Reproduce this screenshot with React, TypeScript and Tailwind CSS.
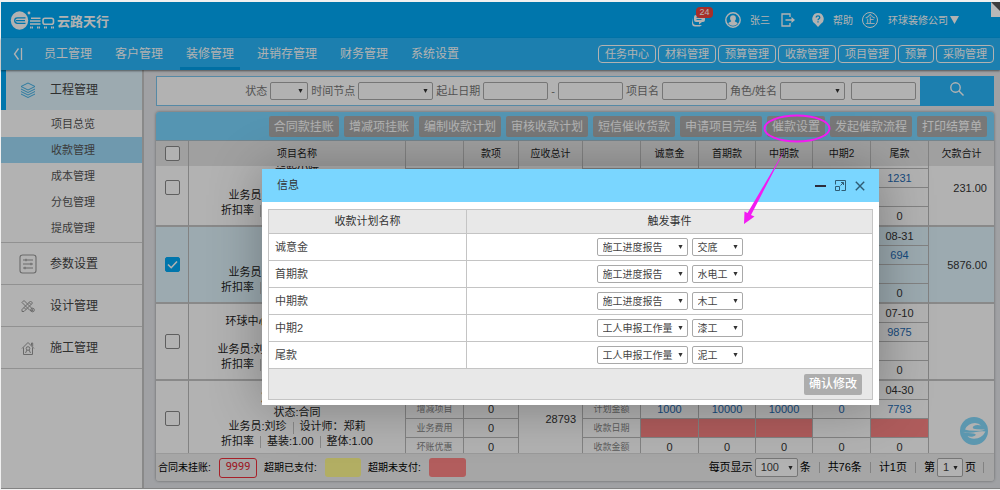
import React from 'react';

const font =
  "font-['Liberation_Sans','Noto_Sans_CJK_SC',sans-serif]";

function Caret({ className = '' }: { className?: string }) {
  return (
    <svg viewBox="0 0 6 6" className={`pointer-events-none absolute h-[6px] w-[5px] ${className}`} aria-hidden="true">
      <path d="M0.500 0.500h5L3 5.500z" fill="#333" />
    </svg>
  );
}

function Select({ label, options, className, textClass = 'text-[10px]' }: { label: string; options: string[]; className: string; textClass?: string }) {
  return (
    <span className={`relative flex items-center ${className}`}>
      <select
        aria-label={label}
        className={`size-full appearance-none rounded-[2px] border border-[#a9a9a9] bg-white pl-[5px] text-[#444] ${textClass}`}
      >
        {options.map((o) => (
          <option key={o}>{o}</option>
        ))}
      </select>
      <Caret className="right-[5px]" />
    </span>
  );
}

function Check({ label, checked = false }: { label: string; checked?: boolean }) {
  return (
    <label className="mx-auto grid size-[15px] place-items-center">
      <input
        type="checkbox"
        aria-label={label}
        defaultChecked={checked}
        className="peer col-start-1 row-start-1 size-[15px] appearance-none rounded-[2px] border border-[#888] bg-white checked:border-[#00aaf7] checked:bg-[#00aaf7]"
      />
      <svg viewBox="0 0 15 15" className="pointer-events-none invisible col-start-1 row-start-1 size-[15px] peer-checked:visible" aria-hidden="true">
        <path d="M3 7.5l3.2 3.2L12 4.5" fill="none" stroke="#fff" strokeWidth="1.6" />
      </svg>
    </label>
  );
}

const navItems = ['员工管理', '客户管理', '装修管理', '进销存管理', '财务管理', '系统设置'];
const quickLinks = ['任务中心', '材料管理', '预算管理', '收款管理', '项目管理', '预算', '采购管理'];
const subItems = ['项目总览', '收款管理', '成本管理', '分包管理', '提成管理'];
const actions = ['合同款挂账', '增减项挂账', '编制收款计划', '审核收款计划', '短信催收货款', '申请项目完结', '催款设置', '发起催款流程', '打印结算单'];
const headers = ['项目名称', '', '款项', '应收总计', '', '诚意金', '首期款', '中期款', '中期2', '尾款', '欠款合计'];

type Project = {
  name: string;
  sales: string;
  designer: string;
  total: string;
  owed: string;
  selected?: boolean;
  dates: string[];
  plans: string[];
  overdue: boolean[];
};

const none = [false, false, false, false, false];
const projects: Project[] = [
  { name: '华熙小院', sales: '刘珍', designer: '郑莉', total: '4500', owed: '231.00', dates: ['', '', '', '', '07-20'], plans: ['1000', '2000', '1000', '0', '1231'], overdue: none },
  { name: '锦绣小区', sales: '刘珍', designer: '郑莉', total: '5876', owed: '5876.00', selected: true, dates: ['', '', '', '', '08-31'], plans: ['1000', '2000', '1000', '0', '694'], overdue: none },
  { name: '环球中心三号楼二单元一二室', sales: '刘小珍', designer: '郑莉莉', total: '29875', owed: '', dates: ['', '', '', '', '07-10'], plans: ['1000', '10000', '9000', '0', '9875'], overdue: none },
  { name: '凌云国际小区1', sales: '刘珍', designer: '郑莉', total: '28793', owed: '', dates: ['', '', '', '', '04-30'], plans: ['1000', '10000', '10000', '0', '7793'], overdue: [true, true, true, false, true] },
];

const feeLabels = ['合同金额', '增减项目', '业务费用', '坏账优惠'];
const planLabels = ['应收日期', '计划金额', '收款日期', '收款金额'];

function Columns() {
  return (
    <colgroup>
      <col className="w-[32px]" />
      <col />
      <col className="w-[58px]" />
      <col className="w-[55px]" />
      <col className="w-[64px]" />
      <col className="w-[58px]" />
      <col className="w-[58px]" />
      <col className="w-[57px]" />
      <col className="w-[57px]" />
      <col className="w-[58px]" />
      <col className="w-[58px]" />
      <col className="w-[66px]" />
    </colgroup>
  );
}

function Bar() {
  return <span className="mx-[6px] inline-block h-[12px] w-px bg-[#c4c4c4] align-middle" />;
}

function ProjectRows({ p }: { p: Project }) {
  const group = 'border-b-2 border-b-[#c4c4c4] border-l border-l-[#bbb] p-0';
  return (
    <tbody className={p.selected ? 'bg-[#e0f4fd]' : 'bg-white'}>
      {[0, 1, 2, 3].map((i) => {
        const cell = `border-l border-[#bbb] p-0 text-center ${i === 3 ? 'border-b-2 border-b-[#c4c4c4]' : 'border-b'}`;
        return (
          <tr key={i} className={i === 3 ? 'h-[20px]' : 'h-[19px]'}>
            {i === 0 && (
              <>
                <td rowSpan={4} className="border-b-2 border-[#c4c4c4] p-0">
                  <Check label={`选择 ${p.name}`} checked={p.selected} />
                </td>
                <td rowSpan={4} className={`${group} pt-[2px] text-center leading-[14px] whitespace-nowrap text-[#222]`}>
                  <div>{p.name}</div>
                  <div>状态:合同</div>
                  <div>
                    业务员:{p.sales}
                    <Bar />
                    设计师：{p.designer}
                  </div>
                  <div>
                    折扣率
                    <Bar />
                    基装:1.00
                    <Bar />
                    整体:1.00
                  </div>
                </td>
              </>
            )}
            <td className={`${cell} text-[9px] text-[#888]`}>{feeLabels[i]}</td>
            <td className={cell}>0</td>
            {i === 0 && (
              <td rowSpan={4} className={`${group} pr-[6px] text-right`}>
                {p.total}
              </td>
            )}
            <td className={`${cell} text-[9px] text-[#888]`}>{planLabels[i]}</td>
            {[0, 1, 2, 3, 4].map((c) => {
              if (i === 0) return <td key={c} className={cell}>{p.dates[c]}</td>;
              if (i === 1) return <td key={c} className={`${cell} text-[#1f6cb5]`}>{p.plans[c]}</td>;
              if (i === 2) return <td key={c} className={`${cell} ${p.overdue[c] ? 'bg-[#fb8585]' : ''}`} />;
              return <td key={c} className={cell}>0</td>;
            })}
            {i === 0 && (
              <td rowSpan={4} className={`${group} pr-[7px] text-right`}>
                {p.owed}
              </td>
            )}
          </tr>
        );
      })}
    </tbody>
  );
}

function Logo() {
  return (
    <a href="#" aria-label="云路天行" className="flex items-center text-white">
      <svg viewBox="0 0 46 20" className="h-[20px] w-[46px]" aria-hidden="true">
        <ellipse cx="9.500" cy="10.500" rx="8.700" ry="9.300" fill="#fff" />
        <path d="M15.500 7.800H7.500a2.800 2.800 0 0 0 0 5.600H15.500M6 10.600h9" fill="none" stroke="#00aaf7" strokeWidth="1.300" />
        <circle cx="19" cy="3" r="1.400" fill="#fff" />
        <path d="M21 8.200h9.500M20 11h10.500M20 14h10.500" stroke="#fff" strokeWidth="1.400" />
        <rect x="33" y="8.200" width="10.500" height="6" rx="2" fill="none" stroke="#fff" strokeWidth="1.600" />
        <path d="M20 17.500h3M27 17.500h3M34 17.500h3M41 17.500h3" stroke="#fff" strokeWidth="2.200" strokeDasharray="1.300 .4" />
      </svg>
      <span className="pt-[3px] pl-px text-[13px] font-bold">云路天行</span>
    </a>
  );
}

function Header() {
  return (
    <header className="flex h-[36px] shrink-0 items-center bg-[#00aaf7] pr-[41px] pl-[9px] text-[10px] text-white">
      <Logo />
      <div className="ml-auto flex items-center">
        <button aria-label="消息" className="relative mr-[19px] h-[14px] w-[14px]">
          <svg viewBox="0 0 14 14" className="size-[14px]" aria-hidden="true">
            <path d="M4 2h7q2 0 2 2v3q0 2-2 2h-1l-3 2.500V9H4Q2 9 2 7V4q0-2 2-2z" fill="#fff" />
            <path d="M1 5v4q0 3 3 3h6l-2 1.500H3Q0 13.500 0 10z" fill="#fff" />
            <path d="M4.500 4.500h6M4.500 6.500h5" stroke="#00aaf7" strokeWidth=".9" />
          </svg>
          <span className="absolute -top-[6px] left-[4px] flex h-[11px] w-[17px] items-center justify-center rounded-[4px] bg-[#f0433b] text-[9px] leading-none">24</span>
        </button>
        <svg viewBox="0 0 16 16" className="size-[16px]" aria-hidden="true">
          <circle cx="8" cy="8" r="7.200" fill="none" stroke="#fff" strokeWidth="1.4" />
          <path d="M8 3.200c1.900 0 2.900 1.300 2.900 3 0 1.300-.5 2.200-1.200 2.900 0 1 2.300 1 3 2.400Q11 13.800 8 13.800T3.300 11.500c.7-1.400 3-1.400 3-2.400C5.600 8.400 5.100 7.500 5.100 6.200c0-1.700 1-3 2.900-3z" fill="#fff" />
        </svg>
        <a href="#" className="ml-[9px]">张三</a>
        <button aria-label="退出" className="ml-[11px]">
          <svg viewBox="0 0 14 14" className="size-[14px]" aria-hidden="true">
            <path d="M9 4V1H1v12h8v-3M4.500 7H12" fill="none" stroke="#fff" strokeWidth="1.300" />
            <path d="M10.500 4 14 7l-3.500 3z" fill="#fff" />
          </svg>
        </button>
        <svg viewBox="0 0 12 14" className="ml-[17px] h-[14px] w-[12px]" aria-hidden="true">
          <path d="M6 0a5.800 5.800 0 0 1 3 10.700L6 14 3 10.700A5.800 5.800 0 0 1 6 0z" fill="#fff" />
          <path d="M4.200 4.600C4.200 2.300 7.800 2.400 7.800 4.500 7.800 5.800 6 5.700 6 7.200M6 8.200v1.300" fill="none" stroke="#00aaf7" strokeWidth="1.300" />
        </svg>
        <a href="#" className="ml-[9px]">帮助</a>
        <span className="ml-[9px] flex size-[16px] items-center justify-center rounded-full border border-white text-[10px] leading-none">企</span>
        <button className="ml-[10px] flex items-center gap-[2px]">
          环球装修公司
          <svg viewBox="0 0 9 8" className="h-[8px] w-[9px]" aria-hidden="true">
            <path d="M0 0h9L4.500 8z" fill="#fff" />
          </svg>
        </button>
      </div>
    </header>
  );
}

function Nav() {
  return (
    <nav className="relative z-10 flex h-[32px] shrink-0 items-stretch bg-[#29b7fb] pr-[6px] text-white shadow-[0_1px_2px_rgba(0,0,0,0.5)]">
      <button aria-label="收起菜单" className="flex w-[37px] items-center pl-[12px]">
        <svg viewBox="0 0 10 12" className="h-[12px] w-[10px]" aria-hidden="true">
          <path d="M5.500.5 1.500 6l4 5.500M8.500 0v12" fill="none" stroke="#fff" strokeWidth="1.300" />
        </svg>
      </button>
      <div className="flex gap-[11px]">
        {navItems.map((n) => (
          <a
            key={n}
            href="#"
            className={`flex items-center border-b-3 px-[6px] pt-[2px] text-[12px] ${n === '装修管理' ? 'border-[#00a0ea]' : 'border-transparent'}`}
          >
            {n}
          </a>
        ))}
      </div>
      <div className="ml-auto flex items-center gap-[2px]">
        {quickLinks.map((n) => (
          <button key={n} className="h-[18px] rounded-[4px] border border-white px-[6px] text-[11px] leading-[16px]">
            {n}
          </button>
        ))}
      </div>
    </nav>
  );
}

function SideItem({ label, children }: { label: string; children: React.ReactNode }) {
  return (
    <a href="#" className="flex h-[42px] items-center border-b border-[#d0d0d0] pl-[18px] text-[12px] text-[#444]">
      <span className="flex w-[18px] justify-center">{children}</span>
      <span className="ml-[13px]">{label}</span>
    </a>
  );
}

function Sidebar() {
  return (
    <aside className="w-[143px] shrink-0 border-r-2 border-[#c4c4c4] bg-white">
      <a href="#" className="flex h-[40px] items-center border-l-5 border-[#00aaf7] bg-[#e0f4fd] pl-[14px] text-[12px] text-[#444]">
        <svg viewBox="0 0 16 16" className="size-[16px]" fill="none" stroke="#3fb0e6" strokeWidth="1" aria-hidden="true">
          <path d="M8 1 15 4.500 8 8 1 4.500z" />
          <path d="M1 7l7 3.500L15 7M1 9.500 8 13l7-3.500M1 12l7 3.500 7-3.500" />
        </svg>
        <span className="ml-[14px]">工程管理</span>
      </a>
      <div className="border-b border-[#d0d0d0] py-px">
        {subItems.map((s) => (
          <a
            key={s}
            href="#"
            className={`flex h-[26px] items-center pl-[50px] text-[11px] text-[#555] ${s === '收款管理' ? 'bg-[#a0dcfa]' : ''}`}
          >
            {s}
          </a>
        ))}
      </div>
      <SideItem label="参数设置">
        <svg viewBox="0 0 18 20" className="h-[20px] w-[18px]" fill="none" stroke="#999" strokeWidth="1.100" aria-hidden="true">
          <rect x="1" y="1" width="16" height="18" rx="2.500" />
          <path d="M4 6h10M4 10h10M4 14h10M7 4.800v2.400M12 8.800v2.400M6 12.800v2.400" />
        </svg>
      </SideItem>
      <SideItem label="设计管理">
        <svg viewBox="0 0 14 14" className="size-[14px]" fill="none" stroke="#999" strokeWidth="1" aria-hidden="true">
          <path d="M1 3.500 3 1.500l8 8 .5 2.500-2.500-.5zM1 12.500v-2L9.500 2l2 2L3 12.500zM8 3.500l2 2M3 8.500l2 2" />
          <circle cx="11.500" cy="11" r="1.800" />
        </svg>
      </SideItem>
      <SideItem label="施工管理">
        <svg viewBox="0 0 14 14" className="size-[14px]" fill="none" stroke="#999" strokeWidth="1" aria-hidden="true">
          <path d="M1 7.500 7 1.500l6 6M2.500 6.500v7h9v-7M10.500 4.500V2h1.200v3.500" />
          <circle cx="7" cy="7.500" r="1.800" />
          <path d="M6 9l-1.500 3M8 9l1.500 3" />
        </svg>
      </SideItem>
    </aside>
  );
}

const box = 'h-[18px] w-[65px] rounded-[2px] border border-[#a9a9a9] bg-white px-1 text-[11px]';

function SearchBar() {
  return (
    <form className="flex h-[30px] shrink-0 items-stretch border border-r-0 border-[#7cc4ec] bg-white text-[11px] text-[#777]">
      <div className="flex flex-1 items-center justify-end gap-[3px] pr-[4px]">
        <span>状态</span>
        <Select label="状态" options={['']} className="h-[18px] w-[38px]" />
        <span>时间节点</span>
        <Select label="时间节点" options={['']} className="h-[18px] w-[75px]" />
        <label htmlFor="from">起止日期</label>
        <input id="from" className={box} />
        <span>-</span>
        <input aria-label="截止日期" className={box} />
        <label htmlFor="proj">项目名</label>
        <input id="proj" className={box} />
        <span>角色/姓名</span>
        <Select label="角色" options={['']} className="mr-[3px] h-[18px] w-[65px]" />
        <input aria-label="姓名" className={box} />
      </div>
      <button type="button" aria-label="搜索" className="-my-px flex w-[74px] items-center justify-center bg-[#29b7fb]">
        <svg viewBox="0 0 14 14" className="-mt-[4px] size-[14px]" fill="none" stroke="#fff" strokeWidth="1.400" aria-hidden="true">
          <circle cx="5.500" cy="5.500" r="4.700" />
          <path d="M9 9l4.500 4.500" />
        </svg>
      </button>
    </form>
  );
}

function Footer() {
  return (
    <footer className="flex h-[28px] shrink-0 items-center border-t border-[#ddd] bg-[#eee] pr-[10px] pl-[2px] text-[11px] text-black">
      <span className="w-[61px] text-[10px]">合同未挂账:</span>
      <span className="flex h-[20px] w-[38px] items-center justify-center rounded-[3px] border border-[#f0303c] font-['Roboto',sans-serif] text-[11px] text-[#e02030]">9999</span>
      <span className="ml-[7px] w-[61px] text-[10px]">超期已支付:</span>
      <span className="h-[19px] w-[36px] rounded-[3px] bg-[#fff98e]" />
      <span className="ml-[7px] w-[61px] text-[10px]">超期未支付:</span>
      <span className="h-[19px] w-[37px] rounded-[3px] bg-[#ff8686]" />
      <div className="ml-auto flex items-center">
        <span>每页显示</span>
        <Select label="每页显示" options={['100']} className="mx-[2px] h-[19px] w-[43px]" textClass="text-[11px]" />
        <span>条</span>
        <span className="mx-[8px] h-[11px] w-px bg-[#bbb]" />
        <span>共76条</span>
        <span className="mx-[8px] h-[11px] w-px bg-[#bbb]" />
        <span>计1页</span>
        <span className="mx-[8px] h-[11px] w-px bg-[#bbb]" />
        <span>第</span>
        <Select label="页码" options={['1']} className="mx-[2px] h-[19px] w-[26px]" textClass="text-[11px]" />
        <span>页</span>
        <span className="ml-[7px] h-[11px] w-px bg-[#bbb]" />
      </div>
    </footer>
  );
}

function ProjectPanel() {
  return (
    <section className="mt-[6px] flex min-h-0 flex-1 flex-col overflow-hidden rounded-[3px] shadow-[0_0_3px_rgba(0,0,0,0.4)]">
      <div className="flex h-[29px] shrink-0 items-center justify-end gap-[5px] border-b border-[#a8bfcb] bg-[#7ad6ff] pr-[7px]">
        {actions.map((a) => (
          <button key={a} className="h-[21px] rounded-[2px] bg-[#adadad] px-[5px] text-[12px] leading-[22px] whitespace-nowrap text-white">
            {a}
          </button>
        ))}
      </div>
      <table className="w-full shrink-0 table-fixed border-separate border-spacing-0 bg-[#e6e6e6] text-[10px] text-[#222]">
        <Columns />
        <thead>
          <tr className="h-[25px]">
            <th className="p-0">
              <Check label="全选" />
            </th>
            {headers.map((h, i) => (
              <th key={i} className="border-l border-[#bbb] p-0 font-normal">
                {h}
              </th>
            ))}
          </tr>
        </thead>
      </table>
      <div className="min-h-0 flex-1 overflow-hidden bg-white">
        <table className="-mt-[16px] w-full table-fixed border-separate border-spacing-0 text-[11px] leading-[14px] text-[#333]">
          <Columns />
          {projects.map((p) => (
            <ProjectRows key={p.name} p={p} />
          ))}
        </table>
      </div>
      <Footer />
    </section>
  );
}

const stages = [
  { name: '诚意金', event: '施工进度报告', step: '交底' },
  { name: '首期款', event: '施工进度报告', step: '水电工' },
  { name: '中期款', event: '施工进度报告', step: '木工' },
  { name: '中期2', event: '工人申报工作量', step: '漆工' },
  { name: '尾款', event: '工人申报工作量', step: '泥工' },
];

function Dialog() {
  return (
    <div
      role="dialog"
      aria-label="信息"
      className="absolute top-[169px] left-[262px] z-30 w-[617px] bg-white text-[11px] text-[#333] shadow-[1px_1px_50px_rgba(0,0,0,0.3)]"
    >
      <div className="flex h-[33px] items-center justify-between bg-[#7ad6ff] pr-[14px] pl-[15px]">
        <h2>信息</h2>
        <div className="flex items-center gap-[9px]">
          <button aria-label="最小化">
            <svg viewBox="0 0 11 11" className="size-[11px]" aria-hidden="true">
              <path d="M0 6h11" stroke="#2d2c3b" strokeWidth="2" />
            </svg>
          </button>
          <button aria-label="最大化">
            <svg viewBox="0 0 11 11" className="size-[11px]" fill="none" stroke="#2f5c74" aria-hidden="true">
              <path d="M.5 4.500v-4h10v10h-4M.5 6.500h4v4h-4zM5.500 5.500l3-3M6 2.500h2.500V5" />
            </svg>
          </button>
          <button aria-label="关闭">
            <svg viewBox="0 0 10 10" className="size-[10px]" fill="none" stroke="#2f5c74" strokeWidth="1.400" aria-hidden="true">
              <path d="M.8.8l8.400 8.400M9.200.8.8 9.200" />
            </svg>
          </button>
        </div>
      </div>
      <div className="px-[6px] pt-[7px] pb-[5px]">
        <table className="w-full table-fixed border-collapse border border-[#c4c4c4]">
          <colgroup>
            <col className="w-[198px]" />
            <col />
          </colgroup>
          <thead>
            <tr className="h-[24px] bg-[#e8e8e8]">
              <th className="border border-[#c4c4c4] p-0 font-normal">收款计划名称</th>
              <th className="border border-[#c4c4c4] p-0 font-normal">触发事件</th>
            </tr>
          </thead>
          <tbody>
            {stages.map((s) => (
              <tr key={s.name} className="h-[27px]">
                <td className="border border-[#c4c4c4] py-0 pl-[6px] text-[#444]">{s.name}</td>
                <td className="border border-[#c4c4c4] p-0">
                  <div className="flex justify-center gap-[4px]">
                    <Select label={`${s.name} 触发事件`} options={[s.event]} className="h-[18px] w-[91px]" />
                    <Select label={`${s.name} 工序`} options={[s.step]} className="h-[18px] w-[51px]" />
                  </div>
                </td>
              </tr>
            ))}
          </tbody>
          <tfoot>
            <tr className="h-[31px] bg-[#e8e8e8]">
              <td colSpan={2} className="p-0 pr-[10px]">
                <button className="ml-auto block h-[21px] rounded-[2px] bg-[#adadad] px-[5px] text-[12px] leading-[21px] font-medium text-white">确认修改</button>
              </td>
            </tr>
          </tfoot>
        </table>
      </div>
    </div>
  );
}

export default function App() {
  return (
    <div className={`relative h-screen overflow-hidden bg-[#f0f0f0] pt-[2px] pb-px pl-px ${font}`}>
      <div className="flex h-full flex-col">
        <Header />
        <Nav />
        <div className="flex min-h-0 flex-1 border-b border-[#bbb] bg-[#e5e7eb]">
          <Sidebar />
          <main className="flex min-w-0 flex-1 flex-col pt-[6px] pr-[6px] pb-[7px] pl-[12px]">
            <SearchBar />
            <ProjectPanel />
          </main>
        </div>
      </div>

      <button aria-label="在线客服" className="absolute right-[12px] bottom-[45px] z-10">
        <svg viewBox="0 0 28 28" className="size-[28px]" aria-hidden="true">
          <circle cx="14" cy="14" r="14" fill="#84d8fb" />
          <path d="M5 12.500Q8 6 15 6q4 0 6 2.500-3-1-5.500-.3c-3.500 1-3.500 3.300-.5 3.800q3 .4 10 .5-2 1.300-9 1.200-8 0-11-1.200z" fill="#fff" />
          <path d="M3 15.200q8 1.300 13-.2 5-1 9.500-.5Q22 21.500 14 21.700q-4.500 0-6.500-2.700 3 1 5.500.4c3.500-1 3.500-2.600.5-3-3-.2-7.500.2-10.500-1.200z" fill="#fff" />
        </svg>
      </button>

      <div className="absolute top-[2px] right-0 bottom-px left-px z-20 bg-black/30" />

      <svg viewBox="0 0 9 15" className="absolute top-[2px] right-0 z-30 h-[15px] w-[9px]" aria-hidden="true">
        <path d="M0 0h9v15H0z" fill="#b8b8b8" />
        <path d="M0 0h9v9z" fill="#3c3c3c" />
      </svg>

      <Dialog />

      <svg viewBox="0 0 92 114" className="pointer-events-none absolute top-[113px] left-[742px] z-40 h-[114px] w-[92px]" aria-hidden="true">
        <ellipse cx="55" cy="15.500" rx="32.500" ry="13" fill="none" stroke="#f21bf2" strokeWidth="2" />
        <path d="M43.500 35.500 9 102l3.500 1.500L2 111 2.500 98.500l3 1.500z" fill="#f21bf2" />
      </svg>
    </div>
  );
}
